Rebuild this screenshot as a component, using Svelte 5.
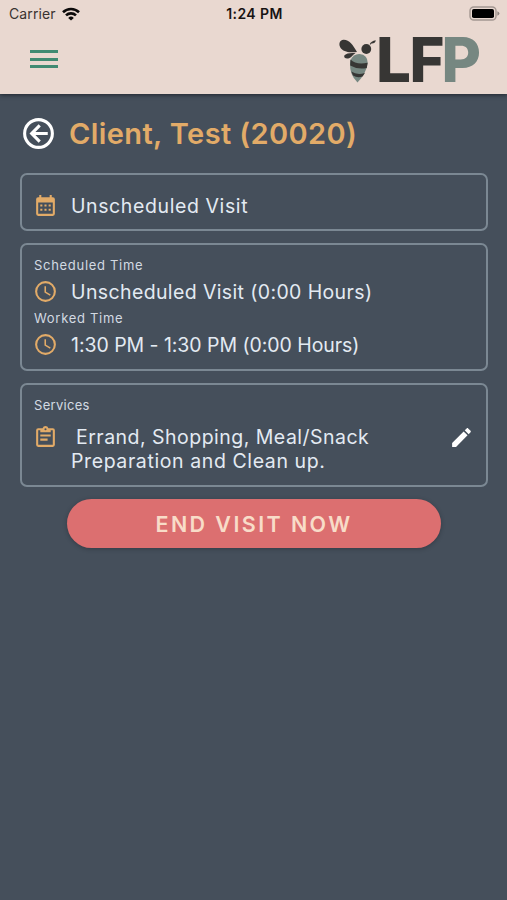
<script lang="ts">
  const clock =
    'M12 20A8 8 0 1 0 12 4a8 8 0 0 0 0 16m0-18a10 10 0 1 1 0 20 10 10 0 0 1 0-20m.5 5v5.25l4.5 2.67-.75 1.23L11 13V7z';

  const times = [
    { label: 'Scheduled Time', value: 'Unscheduled Visit (0:00 Hours)', spacing: 0.38 },
    { label: 'Worked Time', value: '1:30 PM - 1:30 PM (0:00 Hours)', spacing: -0.05 }
  ];
</script>

<div class="screen">
  <header>
    <!-- Status bar -->
    <div class="status">
      <div class="carrier">
        <span>Carrier</span>
        <svg viewBox="0 0 18 14" width="18" height="14" fill="none" stroke="#0c0a0a" stroke-width="2.6">
          <path d="M1 5.2a11.6 11.6 0 0 1 16 0" />
          <path d="M4 8.4a7.2 7.2 0 0 1 10 0" />
          <path d="M9 13.6 6.2 10.9a4 4 0 0 1 5.6 0z" fill="#0c0a0a" stroke="none" />
        </svg>
      </div>
      <span class="time">1:24 PM</span>
      <svg class="battery" viewBox="0 0 31 15" width="31" height="15">
        <rect x="1" y="1" width="26" height="13" rx="3.8" fill="none" stroke="#a39791" stroke-width="1.4" />
        <rect x="3" y="3" width="22" height="9" rx="1.8" fill="#000" />
        <path d="M28.4 5.2q2 .8 2 2.3t-2 2.3z" fill="#8f8580" />
      </svg>
    </div>

    <!-- Toolbar -->
    <div class="toolbar">
      <button class="menu" aria-label="Menu">
        <span></span>
        <span></span>
        <span></span>
      </button>
      <svg class="logo" viewBox="0 0 142 50" width="142" height="50">
        <g fill="#373634">
          <path d="M19 17C15 17.500 7 18 3 13.500 0 9.500 1.500 5 5.500 4.800 11 4.500 15 10 19 17z" />
          <path d="M17.500 18.200C14 17.500 8 18 6.300 20.500 5.500 23 8.500 24.300 11.500 23 13.500 22 14.500 20 17.500 18.200z" />
          <circle cx="28.300" cy="14" r="4.900" />
          <path d="M31.700 9.200Q33 6 37.800 5.200 37.200 8.700 33.500 8.500L32.200 9.700z" />
        </g>
        <path d="M12.500 25Q15.500 18.700 21.500 19 29.800 19.800 29.700 28 28.500 38 19.500 47.500 11.500 40 12 28z" fill="#768781" />
        <path d="M12.500 24.500Q18 30 29.600 27.700L28.800 33Q20 35 12.200 30.500z" fill="#373634" />
        <path d="M13.300 36.500Q19 40.500 26.900 38L24.600 41.500Q19.500 43.500 15 40.500z" fill="#373634" />
        <text class="mark" x="38" y="47" textLength="35" lengthAdjust="spacingAndGlyphs">L</text>
        <text class="mark" x="71.500" y="47" textLength="35" lengthAdjust="spacingAndGlyphs">F</text>
        <text class="mark light" x="103.500" y="47" textLength="39.500" lengthAdjust="spacingAndGlyphs">P</text>
      </svg>
    </div>
  </header>

  <main>
    <div class="title">
      <svg viewBox="0 0 24 24" width="37" height="37" fill="#fff">
        <path d="M18 11v2h-8l3.500 3.500-1.420 1.420L6.160 12l5.920-5.920L13.500 7.500 10 11zM2 12a10 10 0 1 1 20 0 10 10 0 0 1-20 0m2 0a8 8 0 1 0 16 0 8 8 0 0 0-16 0" />
      </svg>
      <h1>Client, Test (20020)</h1>
    </div>

    <section class="card visit">
      <div class="row">
        <svg class="icon" viewBox="0 0 24 24">
          <path fill-rule="evenodd" d="M19 4h-1V2h-2v2H8V2H6v2H5a2 2 0 0 0-2 2v14a2 2 0 0 0 2 2h14a2 2 0 0 0 2-2V6a2 2 0 0 0-2-2m0 16H5V9h14zM7 11h2v2H7zm4 0h2v2h-2zm4 0h2v2h-2zm-8 4h2v2H7zm4 0h2v2h-2zm4 0h2v2h-2z" />
        </svg>
        <span class="value">Unscheduled Visit</span>
      </div>
    </section>

    <section class="card times">
      {#each times as time}
        <div class="label">{time.label}</div>
        <div class="row">
          <svg class="icon" viewBox="0 0 24 24"><path d={clock} /></svg>
          <span class="value" style="letter-spacing: {time.spacing}px">{time.value}</span>
        </div>
      {/each}
    </section>

    <section class="card services">
      <div class="label">Services</div>
      <div class="row">
        <svg class="icon" viewBox="0 0 24 24">
          <path d="M19 3h-4.180a3 3 0 0 0-5.640 0H5a2 2 0 0 0-2 2v14a2 2 0 0 0 2 2h14a2 2 0 0 0 2-2V5a2 2 0 0 0-2-2m-7 0a1 1 0 1 1 0 2 1 1 0 0 1 0-2M5 5h2v2h10V5h2v14H5zm2 4h10v2H7zm0 4h7v2H7z" />
        </svg>
        <div class="value"><span class="first">Errand, Shopping, Meal/Snack</span><br />Preparation and Clean up.</div>
        <svg class="edit" viewBox="0 0 24 24">
          <path d="M20.710 7.040c.390-.390.390-1.040 0-1.410l-2.340-2.340c-.370-.390-1.020-.390-1.410 0l-1.840 1.830 3.750 3.750M3 17.250V21h3.750L17.810 9.930l-3.750-3.750z" />
        </svg>
      </div>
    </section>

    <button class="end">END VISIT NOW</button>
  </main>
</div>

<style>
  :global(body) {
    background: #454f5b;
  }

  .screen {
    box-sizing: border-box;
    width: 507px;
    height: 900px;
    overflow: hidden;
    background: #454f5b;
    font-family: Inter, 'Liberation Sans', sans-serif;
  }

  header {
    height: 94px;
    background: #e9d8d0;
    box-shadow: 0 1px 4px rgba(20, 26, 32, 0.75);
  }

  /* iOS status bar */
  .status {
    display: grid;
    grid-template-columns: 1fr auto 1fr;
    align-items: center;
    height: 27px;
    padding: 0 7px 0 9px;
    color: #181313;
    font-size: 14px;
  }

  .carrier {
    display: flex;
    align-items: center;
    gap: 6px;
    color: #3a3330;
    letter-spacing: 0.1px;
  }

  .time {
    font-weight: 600;
    letter-spacing: 0.4px;
  }

  .battery {
    justify-self: end;
  }

  .toolbar {
    display: flex;
    justify-content: space-between;
    align-items: flex-start;
    padding: 8px 27px 0 30px;
  }

  .menu {
    display: flex;
    flex-direction: column;
    gap: 4.300px;
    width: 28px;
    margin-top: 15px;
    padding: 0;
    border: 0;
    background: none;
  }

  .menu span {
    width: 28px;
    height: 3.300px;
    background: #408a72;
  }

  .logo {
    overflow: visible;
  }

  .mark {
    font-family: Inter, sans-serif;
    font-size: 62px;
    font-weight: 800;
    fill: #373634;
  }

  .mark.light {
    fill: #768781;
  }

  main {
    padding: 21px 19px 0 20px;
  }

  .title {
    display: flex;
    align-items: center;
    gap: 12px;
    height: 37px;
    margin-bottom: 21px;
  }

  h1 {
    margin: 0;
    color: #e2ab68;
    font-size: 29px;
    font-weight: 600;
    letter-spacing: 0.4px;
    white-space: nowrap;
  }

  .card {
    box-sizing: border-box;
    margin-bottom: 12px;
    padding: 0 12px;
    border: 2px solid #7b8893;
    border-radius: 7px;
    color: #e3eaf2;
  }

  .visit {
    height: 58px;
    padding-top: 18px;
  }

  .times {
    height: 128px;
    padding-top: 11px;
  }

  .services {
    height: 104px;
    padding-top: 11px;
  }

  .label {
    height: 18px;
    color: #d3dae2;
    font-size: 13px;
    line-height: 18px;
    letter-spacing: 0.700px;
  }

  .services .label {
    letter-spacing: 0.300px;
  }

  .row {
    display: flex;
    align-items: flex-start;
    height: 35px;
  }

  .times .row {
    padding-top: 5px;
    height: 30px;
  }

  .times .value,
  .visit .value {
    padding-top: 1px;
  }

  .services .row {
    padding-top: 11px;
  }

  .icon {
    flex: none;
    width: 25px;
    height: 25px;
    margin: 0 13px 0 -1px;
    fill: #e2ab68;
  }

  .value {
    flex: 1;
    font-size: 19.500px;
    line-height: 24px;
    letter-spacing: 0.6px;
    white-space: nowrap;
  }

  .first {
    padding-left: 5px;
    letter-spacing: 0.48px;
  }

  .edit {
    flex: none;
    width: 25px;
    height: 25px;
    fill: #fff;
  }

  .end {
    display: block;
    width: 374px;
    height: 49px;
    margin: 0 auto;
    padding: 0;
    border: 0;
    border-radius: 25px;
    background: #dc6f70;
    box-shadow: 0 1px 4px rgba(20, 26, 32, 0.35);
    color: #f8dcc8;
    font-family: inherit;
    font-size: 21.500px;
    font-weight: 600;
    letter-spacing: 2.400px;
  }
</style>
